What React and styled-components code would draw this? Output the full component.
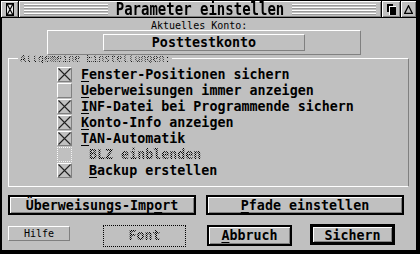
import React from 'react';
import styled, { createGlobalStyle, css } from 'styled-components';

const GRAY = '#c0c0c0';
const DARK = '#808080';

const GlobalStyle = createGlobalStyle`
  html, body {
    margin: 0;
    padding: 0;
    background: ${GRAY};
  }
  body {
    font-family: "DejaVu Sans Mono", monospace;
  }
`;

// checker pattern so disabled text looks dithered like GEM
const dithered = css`
  color: transparent;
  background: repeating-conic-gradient(#000 0 25%, transparent 0 50%) 0 0 / 2px 2px;
  -webkit-background-clip: text;
  background-clip: text;
  text-decoration-color: #505050;
`;

const Window = styled.div`
  box-sizing: border-box;
  width: 420px;
  height: 254px;
  background: ${GRAY};
  border: 1px solid #000;
  border-right-width: 4px;
  border-bottom-width: 4px;
  display: flex;
  flex-direction: column;
  font-family: "DejaVu Sans Mono", monospace;
  color: #000;
`;

const TitleBar = styled.div`
  box-sizing: border-box;
  flex: none;
  display: flex;
  height: 17px;
  border-bottom: 1px solid #000;
`;

const Widget = styled.div`
  box-sizing: border-box;
  flex: none;
  width: ${(p) => p.$w}px;
  display: flex;
  align-items: center;
  justify-content: center;
  box-shadow: inset 1px 1px #fff, inset -1px -1px ${DARK};
  border-left: ${(p) => (p.$sepLeft ? '1px solid #000' : 'none')};
  border-right: ${(p) => (p.$sepRight ? '1px solid #000' : 'none')};
`;

const TitleArea = styled.div`
  flex: 1;
  display: flex;
  align-items: center;
  gap: 8px;
  padding: 0 5px;
  box-shadow: inset 1px 1px #fff, inset -1px -1px ${DARK};
`;

const Stripes = styled.div`
  flex: 1;
  height: 11px;
  margin-top: 1px;
  background: repeating-linear-gradient(
    to bottom,
    #fff 0 1px,
    #9a9a9a 1px 2px,
    transparent 2px 3px
  );
`;

const Title = styled.span`
  display: inline-block;
  font-weight: bold;
  font-size: 14px;
  line-height: 16px;
  transform: scaleY(1.2);
  white-space: pre;
`;

const Body = styled.div`
  flex: 1;
  display: flex;
  flex-direction: column;
  align-items: flex-start;
  border-left: 1px solid #000;
`;

const SmallText = styled.div`
  font-size: 10px;
  line-height: 8px;
  height: 8px;
  margin: 4px 0 0 149px;
  white-space: pre;
`;

const AccountOuter = styled.div`
  box-sizing: border-box;
  width: 314px;
  height: 25px;
  margin-left: 45px;
  padding: 3px 0 0 55px;
  border: 1px solid #fff;
  border-right-color: ${DARK};
  border-bottom-color: ${DARK};
`;

const AccountBox = styled.div`
  box-sizing: border-box;
  width: 202px;
  height: 17px;
  border: 1px solid #fff;
  border-right-color: ${DARK};
  border-bottom-color: ${DARK};
  font-weight: bold;
  font-size: 13.33px;
  line-height: 15px;
  text-align: center;
`;

const Frame = styled.div`
  position: relative;
  box-sizing: border-box;
  width: 401px;
  height: 129px;
  margin: 3px 0 0 6px;
  padding: 8px 0 0 48px;
  border: 1px solid #fff;
  border-right-color: ${DARK};
`;

const FrameLabelBack = styled.span`
  position: absolute;
  top: -4px;
  left: 9px;
  width: 154px;
  height: 8px;
  background: ${GRAY};
`;

const FrameLabel = styled.span`
  position: absolute;
  top: -4px;
  left: 11px;
  font-size: 10px;
  line-height: 8px;
  height: 8px;
  white-space: pre;
  ${dithered};
`;

const Option = styled.div`
  display: flex;
  align-items: flex-start;
  height: 16px;
`;

const Check = styled.span`
  box-sizing: border-box;
  flex: none;
  width: 15px;
  height: 15px;
  display: flex;
  border: 1px ${(p) => (p.$disabled ? 'dotted' : 'solid')} #fff;
  border-right-color: ${(p) => (p.$disabled ? '#f4f4f4' : DARK)};
  border-bottom-color: ${(p) => (p.$disabled ? '#f4f4f4' : DARK)};
`;

const OptionText = styled.span`
  margin-left: ${(p) => (p.$indent ? 17 : 9)}px;
  font-weight: bold;
  font-size: 13.33px;
  line-height: 16px;
  white-space: pre;
  ${(p) => p.$disabled && dithered};
`;

const Key = styled.span`
  text-decoration: underline;
  text-decoration-thickness: 1px;
  text-underline-offset: 2px;
`;

const ButtonRow = styled.div`
  display: flex;
  align-items: flex-start;
  gap: ${(p) => p.$gap || 0}px;
  margin: ${(p) => p.$mt}px 0 0 6px;
`;

const Button = styled.div`
  box-sizing: border-box;
  flex: none;
  width: ${(p) => p.$w}px;
  height: ${(p) => p.$h}px;
  margin-top: ${(p) => p.$mt || 0}px;
  margin-left: ${(p) => p.$ml || 0}px;
  padding-top: 1px;
  display: flex;
  align-items: flex-start;
  justify-content: center;
  font-weight: bold;
  font-size: 13.33px;
  line-height: 15px;
  white-space: pre;
  border: ${(p) => (p.$default ? 3 : 2)}px solid #000;
  box-shadow: inset 1px 1px #fff, inset -1px -1px ${DARK};
`;

const SmallButton = styled.div`
  box-sizing: border-box;
  flex: none;
  width: 62px;
  height: 15px;
  margin-top: 2px;
  display: flex;
  align-items: center;
  justify-content: center;
  font-size: 10px;
  line-height: 8px;
  border: 1px solid #fff;
  border-right-color: ${DARK};
  border-bottom-color: ${DARK};
`;

const DisabledButton = styled.div`
  box-sizing: border-box;
  flex: none;
  width: 83px;
  height: 22px;
  margin-top: 1px;
  margin-left: ${(p) => p.$ml}px;
  display: flex;
  align-items: center;
  justify-content: center;
  border: 1px dotted #000;
`;

const DisabledLabel = styled.span`
  font-weight: bold;
  font-size: 13.33px;
  line-height: 16px;
  ${dithered};
`;

const CloserIcon = () => (
  <svg width="8" height="13" viewBox="0 0 8 13">
    <rect x="0.5" y="0.5" width="7" height="12" fill="#e8e8e8" stroke="#000" />
    <path d="M1 1 L7 12 M7 1 L1 12" stroke="#000" strokeWidth="1.2" fill="none" />
    <path d="M0 1 H8 M0 12 H8" stroke="#000" strokeWidth="1.4" />
  </svg>
);

const FullIcon = () => (
  <svg width="9" height="11" viewBox="0 0 9 11">
    <rect x="0" y="0" width="6" height="8" fill="#000" />
    <rect x="2.5" y="2.5" width="6" height="8" fill="#000" stroke="#fff" strokeWidth="1" />
    <rect x="3" y="3" width="6" height="8" fill="#000" />
  </svg>
);

const BackIcon = () => (
  <svg width="9" height="9" viewBox="0 0 9 9">
    <path d="M4.5 0.8 L8.4 8.5 H0.6 Z" fill="none" stroke="#000" strokeWidth="1.3" />
  </svg>
);

const CrossMark = () => (
  <svg width="13" height="13" viewBox="0 0 13 13">
    <path d="M0.5 0.5 L12.5 12.5 M12.5 0.5 L0.5 12.5" stroke="#202020" strokeWidth="1.1" fill="none" />
  </svg>
);

const options = [
  { pre: '', key: 'F', post: 'enster-Positionen sichern', checked: true },
  { pre: '', key: 'U', post: 'eberweisungen immer anzeigen', checked: false },
  { pre: '', key: 'I', post: 'NF-Datei bei Programmende sichern', checked: true },
  { pre: '', key: 'K', post: 'onto-Info anzeigen', checked: true },
  { pre: '', key: 'T', post: 'AN-Automatik', checked: true },
  { pre: 'BL', key: 'Z', post: ' einblenden', checked: false, disabled: true, indent: true },
  { pre: '', key: 'B', post: 'ackup erstellen', checked: true, indent: true },
];

export default function App() {
  return (
    <>
      <GlobalStyle />
      <Window>
        <TitleBar>
          <Widget $w={18} $sepRight>
            <CloserIcon />
          </Widget>
          <TitleArea>
            <Stripes />
            <Title>Parameter einstellen</Title>
            <Stripes />
          </TitleArea>
          <Widget $w={19} $sepLeft>
            <FullIcon />
          </Widget>
          <Widget $w={16} $sepLeft>
            <BackIcon />
          </Widget>
        </TitleBar>

        <Body>
          <SmallText>Aktuelles Konto:</SmallText>
          <AccountOuter>
            <AccountBox>Posttestkonto</AccountBox>
          </AccountOuter>

          <Frame>
            <FrameLabelBack />
            <FrameLabel>Allgemeine Einstellungen:</FrameLabel>
            {options.map((o) => (
              <Option key={o.key}>
                <Check $disabled={o.disabled}>{o.checked && <CrossMark />}</Check>
                <OptionText $indent={o.indent} $disabled={o.disabled}>
                  {o.pre}
                  <Key>{o.key}</Key>
                  {o.post}
                </OptionText>
              </Option>
            ))}
          </Frame>

          <ButtonRow $mt={8} $gap={10}>
            <Button $w={188} $h={20}>
              Überweisungs-Imp<Key>o</Key>rt
            </Button>
            <Button $w={198} $h={20}>
              <Key>P</Key>fade einstellen
            </Button>
          </ButtonRow>

          <ButtonRow $mt={9}>
            <SmallButton>Hilfe</SmallButton>
            <DisabledButton $ml={33}>
              <DisabledLabel>
                F<Key>o</Key>nt
              </DisabledLabel>
            </DisabledButton>
            <Button $w={85} $h={21} $mt={1} $ml={21}>
              <Key>A</Key>bbruch
            </Button>
            <Button $w={85} $h={21} $ml={18} $default>
              <Key>S</Key>ichern
            </Button>
          </ButtonRow>
        </Body>
      </Window>
    </>
  );
}
